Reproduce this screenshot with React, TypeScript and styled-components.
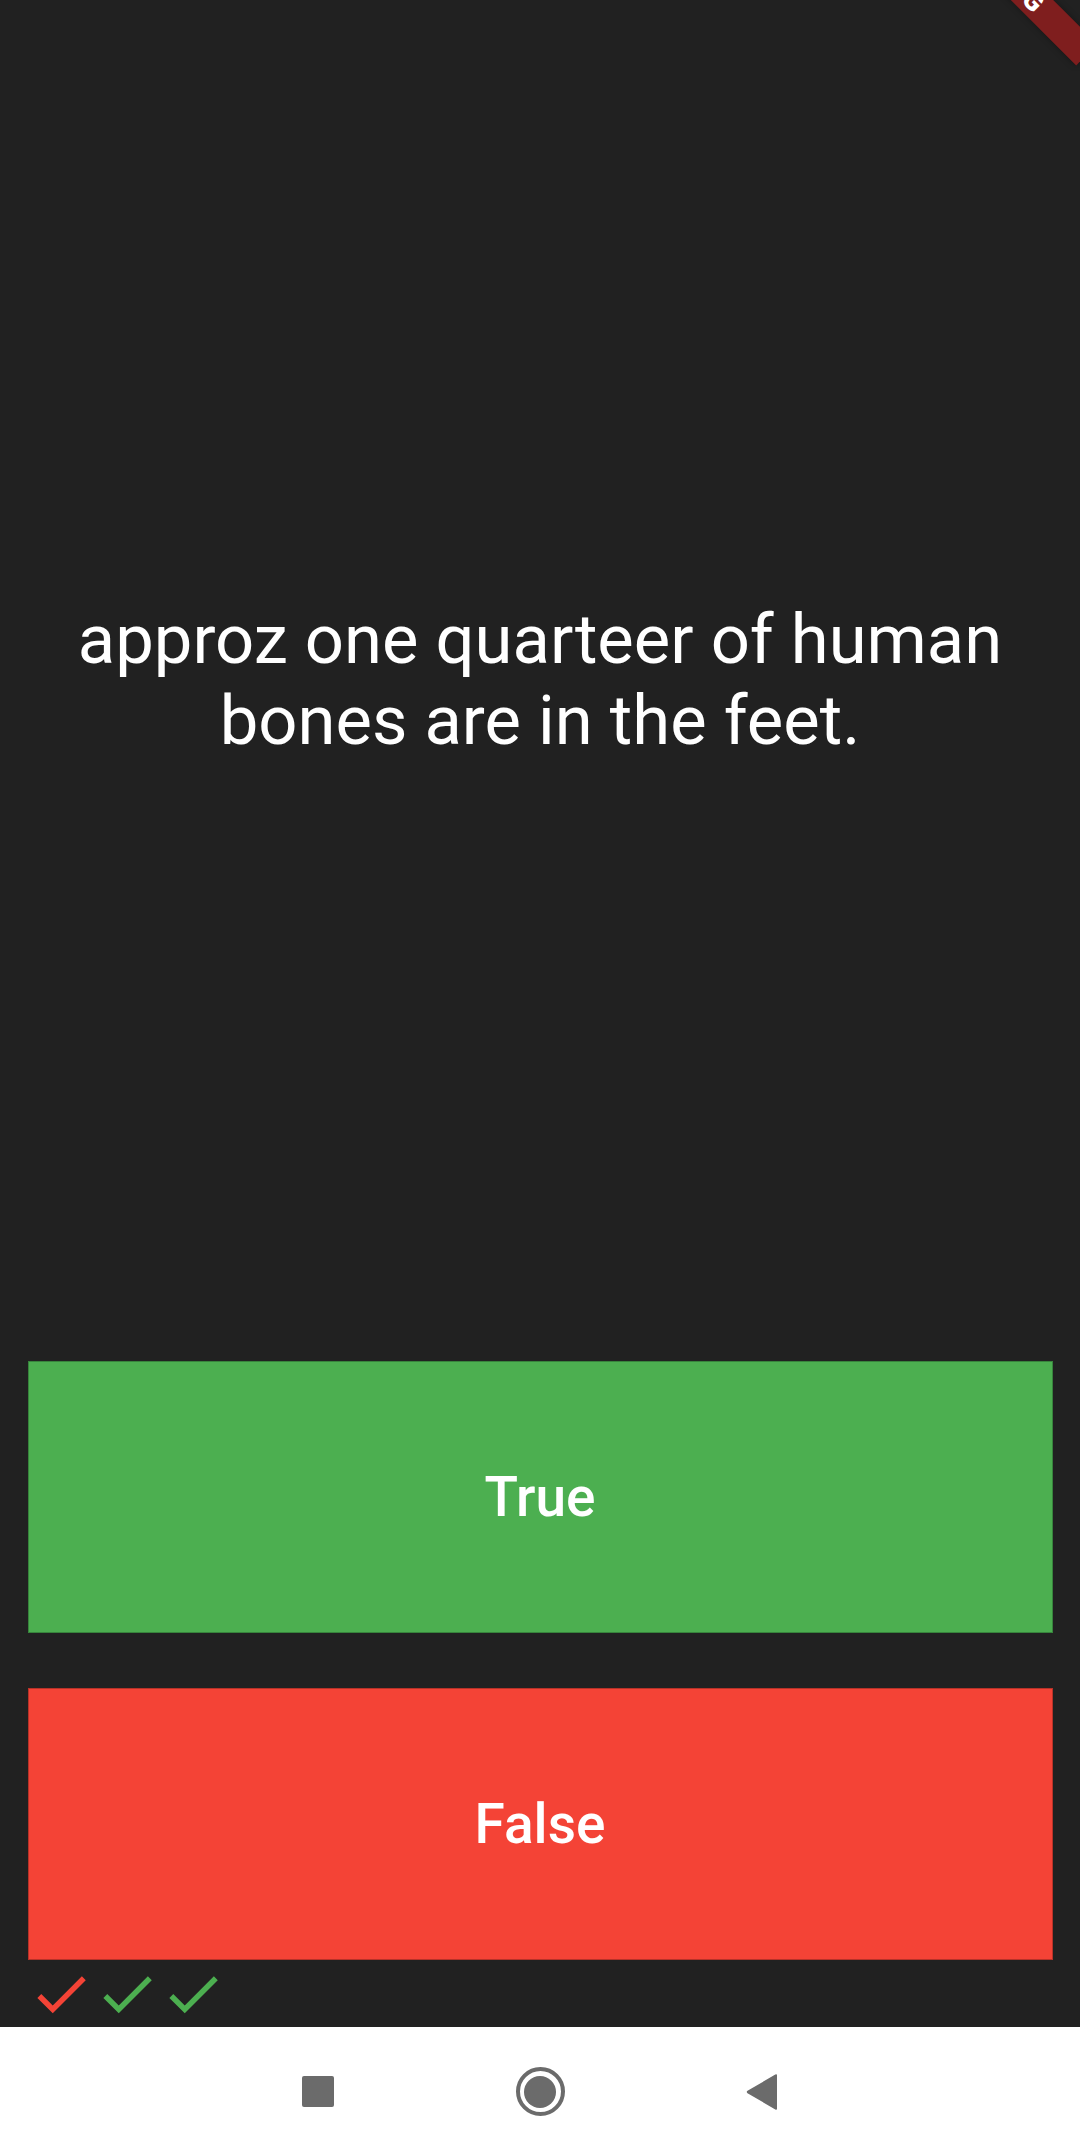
import React from "react";
import styled, { createGlobalStyle } from "styled-components";

const GlobalStyle = createGlobalStyle`
  html, body {
    margin: 0;
    padding: 0;
    background: #212121;
  }
  body {
    font-family: Roboto, "Noto Sans", "Liberation Sans", sans-serif;
  }
`;

const Screen = styled.div`
  position: relative;
  width: 1080px;
  height: 2134px;
  display: flex;
  flex-direction: column;
  overflow: hidden;
  background: #212121;
`;

const Main = styled.main`
  flex: 1;
  display: flex;
  flex-direction: column;
  background: #212121;
`;

const QuestionArea = styled.section`
  height: 1361px;
  box-sizing: border-box;
  padding: 0 27.5px;
  display: flex;
  align-items: center;
  justify-content: center;
`;

const QuestionText = styled.p`
  margin: 0;
  color: #ffffff;
  font-family: Roboto, "Noto Sans", sans-serif;
  font-size: 68.75px;
  line-height: 80.5px;
  font-weight: 400;
  text-align: center;
`;

const ButtonStack = styled.div`
  display: flex;
  flex-direction: column;
  gap: 55px;
  padding: 0 27.5px;
`;

const AnswerButton = styled.button<{ $tone: "true" | "false" }>`
  height: 272px;
  width: 100%;
  border: none;
  margin: 0;
  padding: 0;
  background: ${(p) => (p.$tone === "true" ? "#4CAF50" : "#F44336")};
  box-shadow: inset 0 0 0 1px
    ${(p) => (p.$tone === "true" ? "rgba(30,80,35,0.45)" : "rgba(110,30,25,0.45)")};
  color: #ffffff;
  font-family: Roboto, "Noto Sans", sans-serif;
  font-size: 55px;
  font-weight: 500;
  display: flex;
  align-items: center;
  justify-content: center;
  cursor: pointer;
`;

const ScoreRow = styled.div`
  height: 66px;
  margin-top: 1px;
  padding-left: 27.5px;
  display: flex;
  align-items: flex-start;
`;

const CheckIcon = styled.svg<{ $color: string }>`
  width: 66px;
  height: 66px;
  display: block;
  fill: ${(p) => p.$color};
`;

const NavBar = styled.nav`
  height: 107px;
  box-sizing: border-box;
  padding-top: 22px;
  background: #ffffff;
  display: flex;
  justify-content: center;
  align-items: center;
`;

const NavSlot = styled.div`
  width: 222px;
  display: flex;
  justify-content: center;
  align-items: center;
`;

const NavSquare = styled.div`
  width: 32px;
  height: 31px;
  border-radius: 2px;
  background: #6b6b6b;
`;

const NavHome = styled.div`
  width: 49px;
  height: 49px;
  box-sizing: border-box;
  border-radius: 50%;
  border: 4.5px solid #6b6b6b;
  display: flex;
  align-items: center;
  justify-content: center;
  &::after {
    content: "";
    width: 32px;
    height: 32px;
    border-radius: 50%;
    background: #6b6b6b;
  }
`;

const NavBack = styled.svg`
  width: 32px;
  height: 38px;
  display: block;
`;

const DebugBanner = styled.div`
  position: absolute;
  left: 899px;
  top: -38px;
  width: 220px;
  height: 30px;
  background: #7f1e1e;
  box-shadow: 0 0 6px rgba(0, 0, 0, 0.35);
  transform: rotate(45deg);
  transform-origin: center center;
  color: #ffffff;
  font-family: Roboto, "Noto Sans", sans-serif;
  font-weight: 900;
  font-size: 27px;
  line-height: 30px;
  text-align: center;
  letter-spacing: 0;
  pointer-events: none;
`;

const Check = ({ color }: { color: string }) => (
  <CheckIcon $color={color} viewBox="0 0 24 24" aria-hidden="true">
    <path d="M9 16.17L4.83 12l-1.42 1.41L9 19 21 7l-1.41-1.41z" />
  </CheckIcon>
);

export default function App() {
  const scores = ["#F44336", "#4CAF50", "#4CAF50"];
  return (
    <>
      <GlobalStyle />
      <Screen>
        <Main>
          <QuestionArea>
            <QuestionText>approz one quarteer of human bones are in the feet.</QuestionText>
          </QuestionArea>
          <ButtonStack>
            <AnswerButton $tone="true">True</AnswerButton>
            <AnswerButton $tone="false">False</AnswerButton>
          </ButtonStack>
          <ScoreRow>
            {scores.map((c, i) => (
              <Check key={i} color={c} />
            ))}
          </ScoreRow>
        </Main>
        <NavBar>
          <NavSlot>
            <NavSquare />
          </NavSlot>
          <NavSlot>
            <NavHome />
          </NavSlot>
          <NavSlot>
            <NavBack viewBox="0 0 32 38" aria-hidden="true">
              <path
                d="M31 2.5 L31 35.5 Q31 37.5 29.3 36.5 L1.5 20.2 Q0 19 1.5 17.8 L29.3 1.5 Q31 0.5 31 2.5 Z"
                fill="#6b6b6b"
              />
            </NavBack>
          </NavSlot>
        </NavBar>
        <DebugBanner>DEBUG</DebugBanner>
      </Screen>
    </>
  );
}
